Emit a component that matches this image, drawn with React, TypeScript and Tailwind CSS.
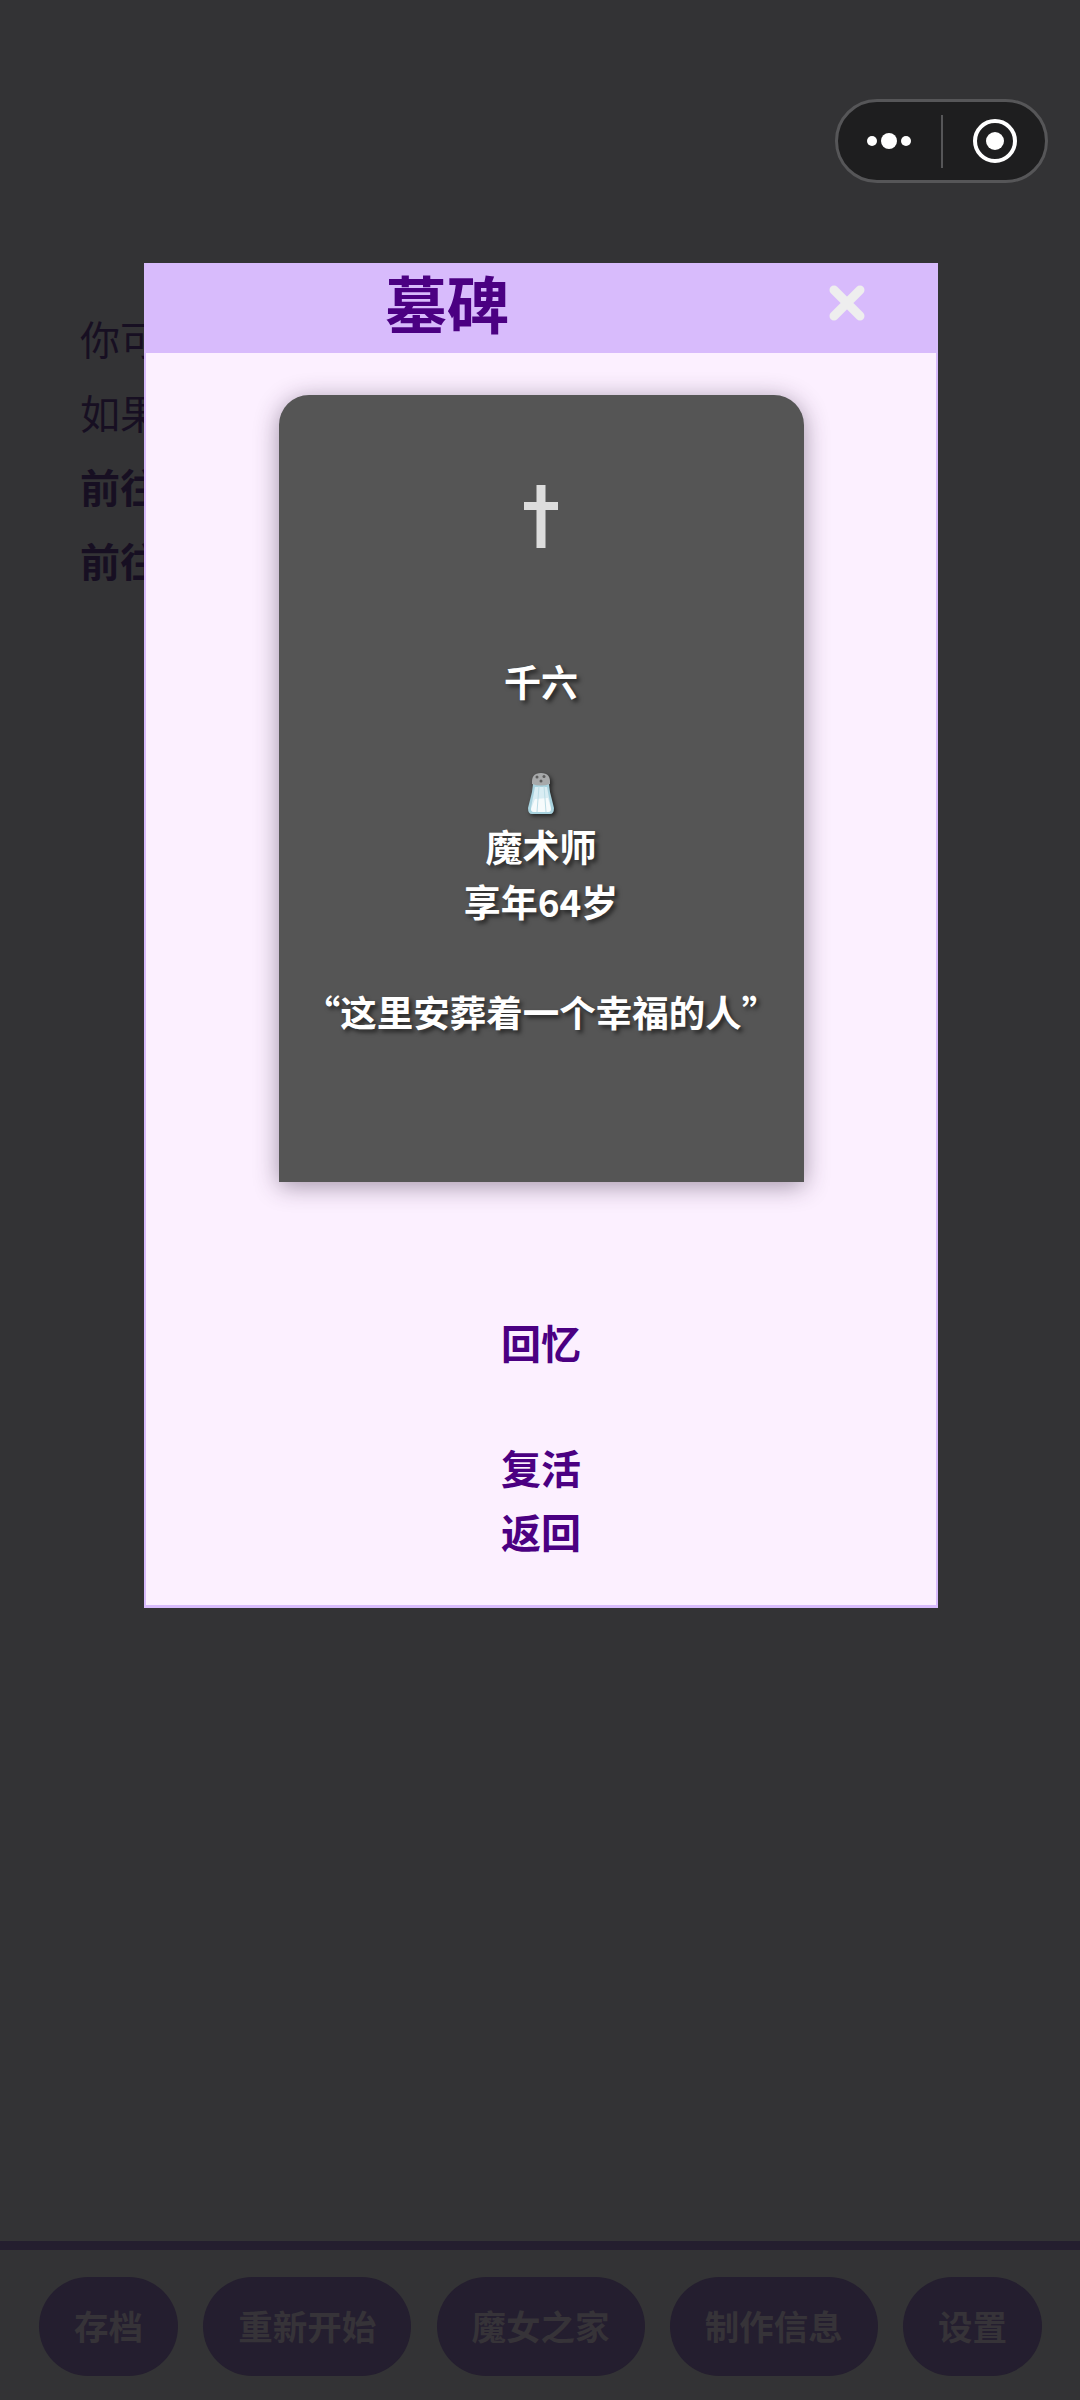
const cjk = "font-['Noto_Sans_CJK_SC','Noto_Sans',sans-serif]";

const menuButtons = ['存档', '重新开始', '魔女之家', '制作信息', '设置'];

function WeChatCapsule() {
  return (
    <div className="absolute left-[835px] top-[99px] flex h-[84px] w-[213px] items-center rounded-full border-[3px] border-[#565658] bg-[#1e1e1f]">
      <div className="flex w-[103px] items-center justify-center gap-[4px] pr-[2px]">
        <span className="h-[10px] w-[10px] rounded-full bg-white" />
        <span className="h-[16px] w-[16px] rounded-full bg-white" />
        <span className="h-[10px] w-[10px] rounded-full bg-white" />
      </div>
      <div className="h-[53px] w-[2px] bg-[#565658]" />
      <div className="flex flex-1 items-center justify-center pl-[2px]">
        <div className="flex h-[44px] w-[44px] items-center justify-center rounded-full border-[4px] border-white">
          <span className="h-[18px] w-[18px] rounded-full bg-white" />
        </div>
      </div>
    </div>
  );
}

function SaltShaker() {
  return (
    <svg width="28" height="43" viewBox="0 0 28 43" className="drop-shadow-[2px_2px_2px_rgba(0,0,0,0.6)]">
      <path d="M6 12 L22 12 L23 20 L27 36 Q27 42 23 42 L5 42 Q1 42 1 36 L5 20 Z" fill="#a8d2de" />
      <path d="M8 15 L20 15 L24 36 Q24 40 21 40 L7 40 Q4 40 4 36 Z" fill="#d9edf3" />
      <path d="M8 27 L21 26 L24 37 Q24 40 21 40 L7 40 Q4 40 4 37 Z" fill="#f6fbfc" />
      <path d="M12 14 L10 40 M17 14 L19 40" stroke="#bcdde6" strokeWidth="1" fill="none" />
      <path d="M5 12 Q4 1 14 1 Q24 1 23 12 Q14 15 5 12 Z" fill="#a7a9aa" />
      <circle cx="10" cy="5" r="1.5" fill="#5c5c5c" />
      <circle cx="17" cy="4.5" r="1.5" fill="#5c5c5c" />
      <circle cx="14" cy="9" r="1.5" fill="#5c5c5c" />
    </svg>
  );
}

function Tombstone() {
  const line = 'leading-[55px] font-bold text-white [text-shadow:3px_3px_4px_rgba(0,0,0,0.55)]';
  return (
    <div className="mx-auto flex h-[787px] w-[525px] flex-col items-center rounded-t-[30px] bg-[#555555] shadow-[0_4px_24px_rgba(50,30,60,0.45)]">
      <svg width="34" height="63" viewBox="0 0 34 63" className="mt-[90px]">
        <path d="M12.5 0 H21.5 V17 H34 V25 H21.5 V63 H12.5 V25 H0 V17 H12.5 Z" fill="#dddddd" />
      </svg>
      <p className={`mt-[106px] text-[37px] ${line}`}>千六</p>
      <div className="mt-[63px] flex h-[43px] items-center">
        <SaltShaker />
      </div>
      <p className={`mt-[4px] text-[37px] ${line}`}>魔术师</p>
      <p className={`text-[37px] ${line}`}>享年64岁</p>
      <p className={`mt-[55px] text-[36.5px] ${line}`}>“这里安葬着一个幸福的人”</p>
    </div>
  );
}

function GraveDialog() {
  const action = 'block w-full text-center text-[40px] font-bold text-[#4b0082]';
  return (
    <div className="absolute left-[144px] top-[263px] flex h-[1345px] w-[794px] flex-col border-x-[2px] border-b-[3px] border-[#d8bbfc] bg-[#fcf0ff]">
      <div className="relative flex h-[90px] shrink-0 items-start bg-[#d8bbfc]">
        <h1 className="ml-[239px] -mt-[6px] text-[62px] leading-[90px] font-bold text-[#4b0082]">墓碑</h1>
        <svg width="36" height="36" viewBox="0 0 36 36" className="absolute left-[683px] top-[22px]">
          <path d="M5 5 L31 31 M31 5 L5 31" stroke="#eeeeee" strokeWidth="9" strokeLinecap="round" />
        </svg>
      </div>
      <div className="flex-1 pt-[42px]">
        <Tombstone />
        <div className="mt-[130px]">
          <button className={`${action} leading-[60px]`}>回忆</button>
          <button className={`${action} mt-[65px] leading-[60px]`}>复活</button>
          <button className={`${action} mt-[4px] leading-[60px]`}>返回</button>
        </div>
      </div>
    </div>
  );
}

export default function App() {
  return (
    <div className={`relative h-[2400px] w-[1080px] overflow-hidden bg-[#333335] ${cjk}`}>
      <div className="px-[80px] pt-[301px] text-[40px] leading-[74px] text-[#170f22]">
        <p>你可以继续</p>
        <p>如果你想</p>
        <p className="font-bold">前往下一世</p>
        <p className="font-bold">前往墓地</p>
      </div>

      <div className="absolute inset-x-0 bottom-[150px] h-[9px] bg-[#241e2f]" />
      <div className="absolute inset-x-0 bottom-[24px] flex justify-between pl-[39px] pr-[38px]">
        {menuButtons.map((label) => (
          <button
            key={label}
            className="h-[99px] rounded-[50px] bg-[#241e2f] px-[35px] pb-[2px] text-[34.5px] font-bold text-[#363338]"
          >
            {label}
          </button>
        ))}
      </div>

      <WeChatCapsule />
      <GraveDialog />
    </div>
  );
}
